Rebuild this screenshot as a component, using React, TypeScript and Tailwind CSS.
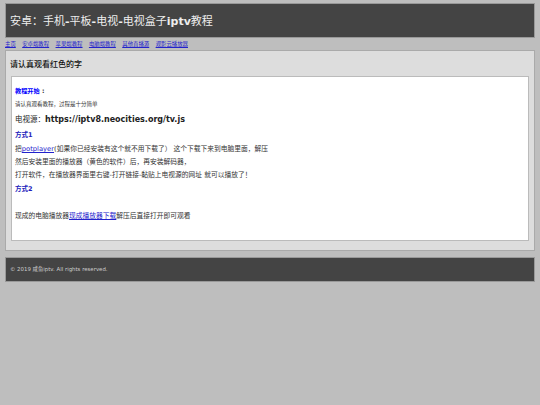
const font = { fontFamily: '"DejaVu Sans", "Noto Sans CJK SC", sans-serif' };

const navLinks = ['主页', '安卓端教程', '苹果端教程', '电脑端教程', '其他直播源', '观影云播放器'];

export default function App() {
  return (
    <div className="min-h-[405px] bg-[#bebebe] px-[5px] pt-[3px] text-[#333]" style={font}>
      <header className="flex h-[35px] items-center border border-[#999] bg-[#444] px-[4px] pt-[3px]">
        <h1 className="text-[11px] font-normal text-[#eee]">
          安卓：手机<b>-</b>平板<b>-</b>电视<b>-</b>电视盒子<b>iptv</b>教程
        </h1>
      </header>

      <nav className="mt-[1px] flex h-[10px] items-center gap-[6.4px] text-[5.4px] text-[#22c]">
        {navLinks.map(link => (
          <a key={link} href="#" className="underline">{link}</a>
        ))}
      </nav>

      <main className="mt-[1px] border border-[#aaa] bg-[#ddd] px-[5px] pt-[8px] pb-[9px]">
        <h2 className="-ml-px text-[8px] leading-[12px] font-medium text-[#111]">请认真观看红色的字</h2>
        <div className="mt-[5px] h-[165px] border border-[#bbb] bg-white px-[3px] pt-[9px]">
          <p className="text-[6.2px] leading-[10px] font-bold"><span className="text-[#00f]">教程开始</span> :</p>
          <p className="mt-[4px] text-[5.5px] leading-[9px]">请认真观看教程，过程是十分简单</p>
          <p className="mt-[5px] text-[8px] leading-[12px] font-bold text-[#222]"><span className="text-[7.5px] font-normal">电视源：</span>https://iptv8.neocities.org/tv.js</p>
          <p className="mt-[4px] text-[6.5px] leading-[10px] font-bold text-[#22b]">方式1</p>
          <p className="mt-[4px] text-[6.75px] leading-[10px]">把<a href="#" className="text-[#22c] underline">potplayer</a>(如果你已经安装有这个就不用下载了）  这个下载下来到电脑里面，解压</p>
          <p className="mt-[3px] text-[6.75px] leading-[10px]">然后安装里面的播放器（黄色的软件）后，再安装解码器，</p>
          <p className="mt-[3px] text-[6.75px] leading-[10px]">打开软件，在播放器界面里右键-打开链接-黏贴上电视源的网址 就可以播放了！</p>
          <p className="mt-[4px] text-[6.5px] leading-[10px] font-bold text-[#22b]">方式2</p>
          <p className="mt-[17px] text-[6.75px] leading-[10px]">现成的电脑播放器<a href="#" className="text-[#22c] underline">现成播放器下载</a>解压后直接打开即可观看</p>
        </div>
      </main>

      <footer className="mt-[6px] flex h-[25px] items-center border border-[#999] bg-[#444] px-[4px] text-[5.4px] text-[#ccc]">
        © 2019 咸鱼iptv. All rights reserved.
      </footer>
    </div>
  );
}
